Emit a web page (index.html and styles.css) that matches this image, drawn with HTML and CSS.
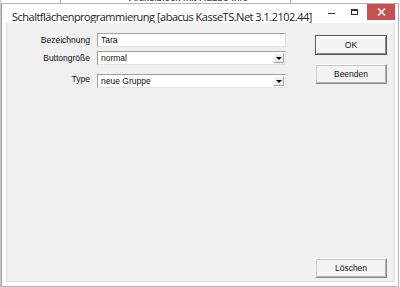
FILE: index.html
```html
<!DOCTYPE html>
<html lang="de">

<head>
    <meta charset="UTF-8">
    <meta name="viewport" content="width=device-width, initial-scale=1.0">
    <title>Schaltflächenprogrammierung</title>
    <link rel="stylesheet" href="styles.css">
</head>

<body>
    <div class="screen">
        <div class="behind">
            <span class="grid-line line-a"></span>
            <span class="behind-text">Artikelblock mit Haube Info</span>
            <span class="grid-line line-b"></span>
        </div>

        <div class="window">
            <div class="titlebar">
                <span class="title">Schaltflächenprogrammierung [abacus KasseTS.Net 3.1.2102.44]</span>
                <div class="caption">
                    <span class="cap min"><i></i></span>
                    <span class="cap max"><i></i></span>
                    <span class="cap close">
                        <svg width="9" height="8" viewBox="0 0 9 8">
                            <path d="M1 0.5 L8 7.5 M8 0.5 L1 7.5" stroke="#fff" stroke-width="1.6" fill="none" />
                        </svg>
                    </span>
                </div>
            </div>

            <div class="client">
                <div class="fields">
                    <div class="row row1">
                        <label>Bezeichnung</label>
                        <div class="textbox">Tara</div>
                    </div>
                    <div class="row row2">
                        <label>Buttongröße</label>
                        <div class="textbox combo">normal<span class="arrow"></span></div>
                    </div>
                    <div class="row row3">
                        <label class="up">Type</label>
                        <div class="textbox combo">neue Gruppe<span class="arrow"></span></div>
                    </div>
                </div>

                <div class="buttons">
                    <div class="btn default">OK</div>
                    <div class="btn">Beenden</div>
                    <div class="btn bottom">Löschen</div>
                </div>
            </div>
        </div>
    </div>
</body>

</html>
```

FILE: styles.css
```css
* {
    padding: 0;
    margin: 0;
    box-sizing: border-box;
}

body {
    background: #fff;
    font-family: "Liberation Sans", Arial, sans-serif;
}

.screen {
    position: relative;
    width: 400px;
    height: 287px;
    overflow: hidden;
    border-left: 1px solid #c9c9c9;
}

.behind {
    position: absolute;
    left: 0;
    top: 0;
    width: 400px;
    height: 4px;
}

.grid-line {
    position: absolute;
    top: 0;
    width: 1px;
    height: 4px;
    background: #a8a8a8;
}

.line-a {
    left: 59px;
}

.line-b {
    left: 289px;
}

.behind-text {
    position: absolute;
    left: 128px;
    top: -8px;
    font-size: 10px;
    color: #222;
}

.window {
    position: relative;
    margin-top: 3px;
    width: 398px;
    height: 284px;
    border: 1px solid #b4b4b4;
    border-left-color: #9c9c9c;
    background: #fff;
    display: flex;
    flex-direction: column;
}

.titlebar {
    height: 19px;
    display: flex;
    align-items: center;
    justify-content: space-between;
}

.title {
    margin-left: 10px;
    margin-top: 6px;
    font-family: "Open Sans", sans-serif;
    font-size: 11px;
    letter-spacing: -0.5px;
    color: #222;
    white-space: nowrap;
}

.caption {
    display: flex;
    flex-shrink: 0;
    align-self: flex-start;
    height: 16px;
    margin-right: 3px;
}

.cap {
    width: 23px;
    height: 16px;
    display: flex;
    align-items: center;
    justify-content: center;
}

.min i {
    display: block;
    width: 7px;
    height: 1px;
    background: #333;
    margin-top: 2px;
}

.max i {
    display: block;
    width: 7px;
    height: 6px;
    border: 1px solid #333;
    border-top-width: 2px;
}

.close {
    width: 28px;
    margin-left: 1px;
    background: #c75050;
}

.client {
    flex: 1;
    margin: 0 3px 4px 4px;
    background: #f0f0f0;
    border: 1px solid #dcdcdc;
    border-top: 0;
    display: flex;
    padding: 10px 0 3px 0;
    font-size: 8.5px;
    color: #111;
}

.fields {
    width: 279px;
}

.row {
    display: flex;
    align-items: center;
    height: 14px;
}

.row1 {
    margin-bottom: 4px;
}

.row2 {
    margin-bottom: 9px;
}

.row label {
    width: 84px;
    padding-right: 1px;
    text-align: right;
}

.row label.up {
    margin-top: -4px;
}

.textbox {
    position: relative;
    margin-left: 6px;
    width: 189px;
    height: 14px;
    background: #fff;
    border: 1px solid #e3e3e3;
    border-top-color: #a0a0a0;
    border-left-color: #a0a0a0;
    padding-left: 3px;
    line-height: 12px;
}

.arrow {
    position: absolute;
    right: 1px;
    top: 1px;
    width: 11px;
    height: 10px;
    background: #f0f0f0;
    border: 1px solid #a0a0a0;
    border-top-color: #fff;
    border-left-color: #fff;
}

.arrow::after {
    content: "";
    position: absolute;
    left: 2px;
    top: 3px;
    border-left: 3px solid transparent;
    border-right: 3px solid transparent;
    border-top: 3px solid #000;
}

.buttons {
    margin-left: 29px;
    width: 72px;
    display: flex;
    flex-direction: column;
}

.btn {
    height: 20px;
    background: #f4f4f4;
    border: 1px solid #fff;
    border-right-color: #8a8a8a;
    border-bottom-color: #8a8a8a;
    box-shadow: 1px 1px 0 #c4c4c4 inset, -1px -1px 0 #b0b0b0 inset;
    text-align: center;
    line-height: 18px;
}

.btn.default {
    margin-top: 2px;
    margin-bottom: 9px;
    border: 1px solid #555;
    box-shadow: 1px 1px 0 #fff inset, -1px -1px 0 #8a8a8a inset;
}

.btn.bottom {
    margin-top: auto;
}
```
